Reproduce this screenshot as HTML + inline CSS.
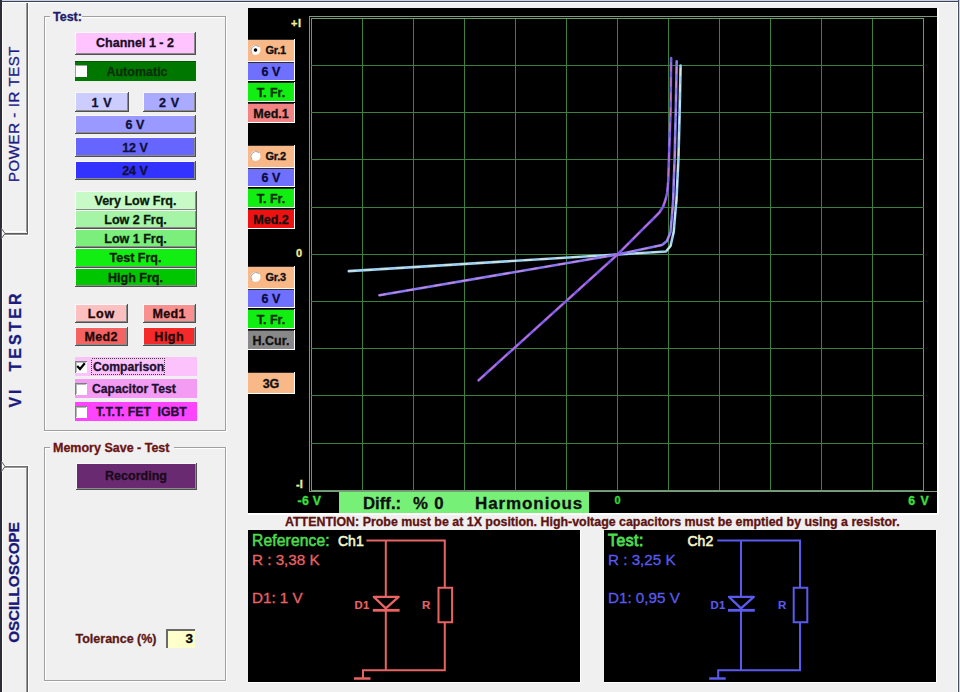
<!DOCTYPE html>
<html><head><meta charset="utf-8"><title>VI Tester</title>
<style>
html,body{margin:0;padding:0;width:960px;height:692px;overflow:hidden;background:#f0f0f0}
svg{display:block}
text{font-family:"Liberation Sans",sans-serif;white-space:pre}
</style></head><body>
<svg width="960" height="692" viewBox="0 0 960 692" shape-rendering="crispEdges">
<rect x="0" y="0" width="960" height="692" fill="#f0f0f0" />
<rect x="0" y="0" width="960" height="1" fill="#c9d2e3" />
<rect x="0" y="1" width="960" height="1" fill="#3b4252" />
<rect x="2" y="2" width="956" height="1" fill="#ffffff" />
<rect x="0" y="0" width="2" height="692" fill="#2b2b39" />
<rect x="2" y="2" width="1" height="692" fill="#ffffff" />
<rect x="958" y="0" width="1" height="692" fill="#4a5060" />
<rect x="959" y="0" width="1" height="692" fill="#c9d2e3" />
<rect x="957" y="2" width="1" height="692" fill="#ffffff" />
<rect x="26" y="3" width="1" height="229" fill="#9a9a9a" />
<rect x="27" y="3" width="1" height="231" fill="#5c5c5c" />
<rect x="28" y="3" width="1" height="232" fill="#ffffff" />
<rect x="4" y="231" width="22" height="1" fill="#ffffff" />
<rect x="4" y="233" width="24" height="1" fill="#5c5c5c" />
<rect x="4" y="234" width="24" height="1" fill="#8c8c8c" />
<rect x="4" y="235" width="25" height="1" fill="#ffffff" />
<path d="M1.5 228.5 L5 233.5 L1.5 238.5 Z" fill="#ffffff" stroke="#5c5c5c" stroke-width="1" shape-rendering="geometricPrecision"/>
<rect x="4" y="465" width="24" height="1" fill="#ffffff" />
<rect x="4" y="466" width="24" height="1" fill="#707070" />
<rect x="4" y="467" width="23" height="1" fill="#9a9a9a" />
<rect x="4" y="468" width="22" height="1" fill="#ffffff" />
<rect x="27" y="466" width="1" height="226" fill="#5c5c5c" />
<rect x="26" y="468" width="1" height="224" fill="#9a9a9a" />
<rect x="28" y="465" width="1" height="227" fill="#ffffff" />
<path d="M1.5 461.5 L5 466.5 L1.5 471.5 Z" fill="#ffffff" stroke="#5c5c5c" stroke-width="1" shape-rendering="geometricPrecision"/>
<text x="0" y="0" transform="translate(19.3,114) rotate(-90)" font-size="15" font-weight="normal" fill="#1a1a88" stroke="#1a1a88" stroke-width="0.3" text-anchor="middle" letter-spacing="0.6">POWER - IR TEST</text>
<text x="0" y="0" transform="translate(20.6,331) rotate(-90)" font-size="16" font-weight="bold" fill="#1a1a80" stroke="#1a1a80" stroke-width="0.3" text-anchor="middle" letter-spacing="3">TESTER</text>
<text x="0" y="0" transform="translate(20.6,397) rotate(-90)" font-size="16" font-weight="bold" fill="#1a1a80" stroke="#1a1a80" stroke-width="0.3" text-anchor="middle" letter-spacing="3">VI</text>
<text x="0" y="0" transform="translate(18.8,582.5) rotate(-90)" font-size="15.2" font-weight="bold" fill="#18187a" stroke="#18187a" stroke-width="0.3" text-anchor="middle" letter-spacing="0">OSCILLOSCOPE</text>
<rect x="44" y="16" width="6" height="1" fill="#a0a0a0" />
<rect x="45" y="17" width="5" height="1" fill="#fff" />
<rect x="82" y="16" width="144" height="1" fill="#a0a0a0" />
<rect x="82" y="17" width="144" height="1" fill="#fff" />
<rect x="44" y="16" width="1" height="415" fill="#a0a0a0" />
<rect x="45" y="17" width="1" height="414" fill="#fff" />
<rect x="225" y="16" width="1" height="415" fill="#a0a0a0" />
<rect x="226" y="16" width="1" height="416" fill="#fff" />
<rect x="44" y="430" width="182" height="1" fill="#a0a0a0" />
<rect x="44" y="431" width="183" height="1" fill="#fff" />
<text x="53" y="21" font-size="12.5" font-weight="bold" fill="#1c1c6c" text-anchor="start" stroke="#1c1c6c" stroke-width="0.3" >Test:</text>
<rect x="44" y="447" width="6" height="1" fill="#a0a0a0" />
<rect x="45" y="448" width="5" height="1" fill="#fff" />
<rect x="174" y="447" width="52" height="1" fill="#a0a0a0" />
<rect x="174" y="448" width="52" height="1" fill="#fff" />
<rect x="44" y="447" width="1" height="234" fill="#a0a0a0" />
<rect x="45" y="448" width="1" height="233" fill="#fff" />
<rect x="225" y="447" width="1" height="234" fill="#a0a0a0" />
<rect x="226" y="447" width="1" height="235" fill="#fff" />
<rect x="44" y="680" width="182" height="1" fill="#a0a0a0" />
<rect x="44" y="681" width="183" height="1" fill="#fff" />
<text x="53" y="452" font-size="12.5" font-weight="bold" fill="#6a1414" text-anchor="start" stroke="#6a1414" stroke-width="0.3" >Memory Save - Test</text>
<rect x="75" y="32" width="121" height="23" fill="#505050" />
<rect x="75" y="32" width="120" height="22" fill="#f8f8f8" />
<rect x="76" y="33" width="119" height="21" fill="#8a8a8a" />
<rect x="76" y="33" width="118" height="20" fill="#ffc4ff" />
<text x="135.0" y="47" font-size="12.5" font-weight="bold" fill="#1c0c24" text-anchor="middle" stroke="#1c0c24" stroke-width="0.3" letter-spacing="0">Channel 1 - 2</text>
<rect x="75" y="61" width="121" height="20" fill="#007800" />
<rect x="75" y="61" width="121" height="1" fill="#005800" />
<rect x="75" y="65" width="12" height="12" fill="#ffffff" />
<rect x="75" y="65" width="12" height="1" fill="#a0a0a0" />
<rect x="75" y="65" width="1" height="12" fill="#a0a0a0" />
<text x="137" y="76" font-size="12.5" font-weight="bold" fill="#0a300a" text-anchor="middle" stroke="#0a300a" stroke-width="0.3" >Automatic</text>
<rect x="75" y="92" width="54" height="20" fill="#505050" />
<rect x="75" y="92" width="53" height="19" fill="#f8f8f8" />
<rect x="76" y="93" width="52" height="18" fill="#8a8a8a" />
<rect x="76" y="93" width="51" height="17" fill="#ccccff" />
<text x="101.8" y="106.5" font-size="12.5" font-weight="bold" fill="#101038" text-anchor="middle" stroke="#101038" stroke-width="0.3" letter-spacing="0.6">1 V</text>
<rect x="143" y="92" width="53" height="20" fill="#505050" />
<rect x="143" y="92" width="52" height="19" fill="#f8f8f8" />
<rect x="144" y="93" width="51" height="18" fill="#8a8a8a" />
<rect x="144" y="93" width="50" height="17" fill="#aaaaff" />
<text x="169.3" y="106.5" font-size="12.5" font-weight="bold" fill="#101038" text-anchor="middle" stroke="#101038" stroke-width="0.3" letter-spacing="0.6">2 V</text>
<rect x="75" y="115" width="121" height="19" fill="#505050" />
<rect x="75" y="115" width="120" height="18" fill="#f8f8f8" />
<rect x="76" y="116" width="119" height="17" fill="#8a8a8a" />
<rect x="76" y="116" width="118" height="16" fill="#9999ff" />
<text x="135.0" y="129" font-size="12.5" font-weight="bold" fill="#101038" text-anchor="middle" stroke="#101038" stroke-width="0.3" letter-spacing="0">6 V</text>
<rect x="75" y="137" width="121" height="20" fill="#505050" />
<rect x="75" y="137" width="120" height="19" fill="#f8f8f8" />
<rect x="76" y="138" width="119" height="18" fill="#8a8a8a" />
<rect x="76" y="138" width="118" height="17" fill="#6666ff" />
<text x="135.0" y="152" font-size="12.5" font-weight="bold" fill="#101038" text-anchor="middle" stroke="#101038" stroke-width="0.3" letter-spacing="0">12 V</text>
<rect x="75" y="161" width="121" height="19" fill="#505050" />
<rect x="75" y="161" width="120" height="18" fill="#f8f8f8" />
<rect x="76" y="162" width="119" height="17" fill="#8a8a8a" />
<rect x="76" y="162" width="118" height="16" fill="#3333ff" />
<text x="135.0" y="175" font-size="12.5" font-weight="bold" fill="#101038" text-anchor="middle" stroke="#101038" stroke-width="0.3" letter-spacing="0">24 V</text>
<rect x="75" y="191" width="122" height="20" fill="#505050" />
<rect x="75" y="191" width="121" height="19" fill="#f8f8f8" />
<rect x="76" y="192" width="120" height="18" fill="#8a8a8a" />
<rect x="76" y="192" width="119" height="17" fill="#c8fac8" />
<text x="135.5" y="205" font-size="12.5" font-weight="bold" fill="#0a1a0a" text-anchor="middle" stroke="#0a1a0a" stroke-width="0.3" letter-spacing="0">Very Low Frq.</text>
<rect x="75" y="210" width="122" height="19" fill="#505050" />
<rect x="75" y="210" width="121" height="18" fill="#f8f8f8" />
<rect x="76" y="211" width="120" height="17" fill="#8a8a8a" />
<rect x="76" y="211" width="119" height="16" fill="#a6f4a6" />
<text x="135.5" y="223.5" font-size="12.5" font-weight="bold" fill="#0a1a0a" text-anchor="middle" stroke="#0a1a0a" stroke-width="0.3" letter-spacing="0">Low 2 Frq.</text>
<rect x="75" y="229" width="122" height="19" fill="#505050" />
<rect x="75" y="229" width="121" height="18" fill="#f8f8f8" />
<rect x="76" y="230" width="120" height="17" fill="#8a8a8a" />
<rect x="76" y="230" width="119" height="16" fill="#7cee7c" />
<text x="135.5" y="242.5" font-size="12.5" font-weight="bold" fill="#0a1a0a" text-anchor="middle" stroke="#0a1a0a" stroke-width="0.3" letter-spacing="0">Low 1 Frq.</text>
<rect x="75" y="248" width="122" height="20" fill="#505050" />
<rect x="75" y="248" width="121" height="19" fill="#f8f8f8" />
<rect x="76" y="249" width="120" height="18" fill="#8a8a8a" />
<rect x="76" y="249" width="119" height="17" fill="#12ee12" />
<text x="135.5" y="262" font-size="12.5" font-weight="bold" fill="#0a1a0a" text-anchor="middle" stroke="#0a1a0a" stroke-width="0.3" letter-spacing="0">Test Frq.</text>
<rect x="75" y="268" width="122" height="19" fill="#505050" />
<rect x="75" y="268" width="121" height="18" fill="#f8f8f8" />
<rect x="76" y="269" width="120" height="17" fill="#8a8a8a" />
<rect x="76" y="269" width="119" height="16" fill="#00c600" />
<text x="135.5" y="281.5" font-size="12.5" font-weight="bold" fill="#0a1a0a" text-anchor="middle" stroke="#0a1a0a" stroke-width="0.3" letter-spacing="0">High Frq.</text>
<rect x="75" y="304" width="53" height="19" fill="#505050" />
<rect x="75" y="304" width="52" height="18" fill="#f8f8f8" />
<rect x="76" y="305" width="51" height="17" fill="#8a8a8a" />
<rect x="76" y="305" width="50" height="16" fill="#fcc0c0" />
<text x="101.4" y="318" font-size="12.5" font-weight="bold" fill="#200808" text-anchor="middle" stroke="#200808" stroke-width="0.3" letter-spacing="0.8">Low</text>
<rect x="143" y="304" width="53" height="19" fill="#505050" />
<rect x="143" y="304" width="52" height="18" fill="#f8f8f8" />
<rect x="144" y="305" width="51" height="17" fill="#8a8a8a" />
<rect x="144" y="305" width="50" height="16" fill="#f89090" />
<text x="169.2" y="318" font-size="12.5" font-weight="bold" fill="#200808" text-anchor="middle" stroke="#200808" stroke-width="0.3" letter-spacing="0.4">Med1</text>
<rect x="75" y="327" width="53" height="19" fill="#505050" />
<rect x="75" y="327" width="52" height="18" fill="#f8f8f8" />
<rect x="76" y="328" width="51" height="17" fill="#8a8a8a" />
<rect x="76" y="328" width="50" height="16" fill="#f46262" />
<text x="101.2" y="341" font-size="12.5" font-weight="bold" fill="#200808" text-anchor="middle" stroke="#200808" stroke-width="0.3" letter-spacing="0.4">Med2</text>
<rect x="143" y="327" width="53" height="19" fill="#505050" />
<rect x="143" y="327" width="52" height="18" fill="#f8f8f8" />
<rect x="144" y="328" width="51" height="17" fill="#8a8a8a" />
<rect x="144" y="328" width="50" height="16" fill="#f42a2a" />
<text x="169.25" y="341" font-size="12.5" font-weight="bold" fill="#200808" text-anchor="middle" stroke="#200808" stroke-width="0.3" letter-spacing="0.5">High</text>
<rect x="75" y="357" width="122" height="19" fill="#fcc2fc" />
<rect x="75" y="361" width="12" height="12" fill="#ffffff" />
<rect x="75" y="361" width="12" height="1" fill="#808080" />
<rect x="75" y="361" width="1" height="12" fill="#808080" />
<rect x="76" y="362" width="10" height="1" fill="#b8b8b8" />
<rect x="76" y="362" width="1" height="10" fill="#b8b8b8" />
<path d="M77.2 366 L80 369 L84.8 363.2" stroke="#000" stroke-width="2.2" fill="none" shape-rendering="geometricPrecision"/>
<rect x="91.5" y="358.5" width="73" height="16" fill="none" stroke="#404040" stroke-width="1" stroke-dasharray="1,1"/>
<text x="93" y="371" font-size="12.2" font-weight="bold" fill="#201030" text-anchor="start" stroke="#201030" stroke-width="0.3" >Comparison</text>
<rect x="75" y="379" width="122" height="19" fill="#f49cf4" />
<rect x="75" y="383" width="12" height="12" fill="#ffffff" />
<rect x="75" y="383" width="12" height="1" fill="#808080" />
<rect x="75" y="383" width="1" height="12" fill="#808080" />
<rect x="76" y="384" width="10" height="1" fill="#b8b8b8" />
<rect x="76" y="384" width="1" height="10" fill="#b8b8b8" />
<text x="92" y="393" font-size="12.2" font-weight="bold" fill="#201030" text-anchor="start" stroke="#201030" stroke-width="0.3" >Capacitor Test</text>
<rect x="75" y="402" width="122" height="19" fill="#ff44ff" />
<rect x="75" y="406" width="12" height="12" fill="#ffffff" />
<rect x="75" y="406" width="12" height="1" fill="#808080" />
<rect x="75" y="406" width="1" height="12" fill="#808080" />
<rect x="76" y="407" width="10" height="1" fill="#b8b8b8" />
<rect x="76" y="407" width="1" height="10" fill="#b8b8b8" />
<text x="96" y="416" font-size="12.2" font-weight="bold" fill="#201030" text-anchor="start" stroke="#201030" stroke-width="0.3" >T.T.T. FET  IGBT</text>
<rect x="76" y="463" width="121" height="27" fill="#505050" />
<rect x="76" y="463" width="120" height="26" fill="#f8f8f8" />
<rect x="77" y="464" width="119" height="25" fill="#8a8a8a" />
<rect x="77" y="464" width="118" height="24" fill="#6a2a72" />
<text x="136.0" y="480" font-size="12.5" font-weight="bold" fill="#1a0a1a" text-anchor="middle" stroke="#1a0a1a" stroke-width="0.3" letter-spacing="0">Recording</text>
<text x="75.5" y="643" font-size="12.5" font-weight="bold" fill="#5c1818" text-anchor="start" stroke="#5c1818" stroke-width="0.3" >Tolerance (%)</text>
<rect x="166" y="629" width="29" height="19" fill="#ffffcc" />
<rect x="166" y="629" width="29" height="2" fill="#6a6a6a" />
<rect x="166" y="629" width="2" height="19" fill="#6a6a6a" />
<text x="193" y="643" font-size="13.5" font-weight="bold" fill="#000" text-anchor="end" stroke="#000" stroke-width="0.3" >3</text>
<rect x="248" y="8" width="689" height="505" fill="#000000" />
<rect x="937" y="8" width="2" height="507" fill="#ffffff" />
<rect x="248" y="513" width="691" height="2" fill="#ffffff" />
<rect x="309" y="16" width="628" height="1" fill="#7c9a7c" />
<rect x="309" y="16" width="1" height="476" fill="#7c9a7c" />
<rect x="309" y="491" width="628" height="1" fill="#7c9a7c" />
<rect x="311" y="18" width="1" height="473" fill="#6c9a6c" />
<rect x="362" y="18" width="1" height="473" fill="#3d803e" />
<rect x="413" y="18" width="1" height="473" fill="#3d803e" />
<rect x="464" y="18" width="1" height="473" fill="#3d803e" />
<rect x="515" y="18" width="1" height="473" fill="#3d803e" />
<rect x="566" y="18" width="1" height="473" fill="#3d803e" />
<rect x="617" y="18" width="1" height="473" fill="#3d803e" />
<rect x="668" y="18" width="1" height="473" fill="#3d803e" />
<rect x="719" y="18" width="1" height="473" fill="#3d803e" />
<rect x="770" y="18" width="1" height="473" fill="#3d803e" />
<rect x="821" y="18" width="1" height="473" fill="#3d803e" />
<rect x="872" y="18" width="1" height="473" fill="#3d803e" />
<rect x="923" y="18" width="1" height="473" fill="#6c9a6c" />
<rect x="311" y="18" width="613" height="1" fill="#6c9a6c" />
<rect x="311" y="65" width="613" height="1" fill="#3d803e" />
<rect x="311" y="112" width="613" height="1" fill="#3d803e" />
<rect x="311" y="159" width="613" height="1" fill="#3d803e" />
<rect x="311" y="207" width="613" height="1" fill="#3d803e" />
<rect x="311" y="254" width="613" height="1" fill="#3d803e" />
<rect x="311" y="301" width="613" height="1" fill="#3d803e" />
<rect x="311" y="348" width="613" height="1" fill="#3d803e" />
<rect x="311" y="395" width="613" height="1" fill="#3d803e" />
<rect x="311" y="443" width="613" height="1" fill="#3d803e" />
<rect x="311" y="490" width="613" height="1" fill="#6c9a6c" />
<rect x="248" y="39" width="47" height="23" fill="#ffffff" />
<rect x="248" y="39" width="46" height="1" fill="#303030" />
<rect x="248" y="40" width="46" height="21" fill="#f8b888" />
<circle cx="255.5" cy="50.0" r="5" fill="#fff" shape-rendering="geometricPrecision"/>
<path d="M252 53.5 A5 5 0 0 1 259 46.5" stroke="#a0a0a0" stroke-width="1" fill="none" shape-rendering="geometricPrecision"/>
<circle cx="255.5" cy="50.0" r="1.8" fill="#000" shape-rendering="geometricPrecision"/>
<text x="265.5" y="54.0" font-size="11" font-weight="bold" fill="#101010" text-anchor="start" stroke="#101010" stroke-width="0.3" letter-spacing="-0.3">Gr.1</text>
<rect x="248" y="62" width="47" height="19" fill="#ffffff" />
<rect x="248" y="62" width="46" height="1" fill="#303030" />
<rect x="248" y="63" width="46" height="17" fill="#7070ff" />
<text x="271" y="76.0" font-size="12.5" font-weight="bold" fill="#0a0a40" text-anchor="middle" stroke="#0a0a40" stroke-width="0.3" >6 V</text>
<rect x="248" y="82" width="47" height="20" fill="#ffffff" />
<rect x="248" y="82" width="46" height="1" fill="#303030" />
<rect x="248" y="83" width="46" height="18" fill="#11ee11" />
<text x="271" y="96.5" font-size="12.5" font-weight="bold" fill="#0a2a0a" text-anchor="middle" stroke="#0a2a0a" stroke-width="0.3" >T. Fr.</text>
<rect x="248" y="103" width="47" height="20" fill="#ffffff" />
<rect x="248" y="103" width="46" height="1" fill="#303030" />
<rect x="248" y="104" width="46" height="18" fill="#f38282" />
<text x="271" y="117.5" font-size="12.5" font-weight="bold" fill="#101010" text-anchor="middle" stroke="#101010" stroke-width="0.3" >Med.1</text>
<rect x="248" y="145" width="47" height="23" fill="#ffffff" />
<rect x="248" y="145" width="46" height="1" fill="#303030" />
<rect x="248" y="146" width="46" height="21" fill="#f8b888" />
<circle cx="255.5" cy="156.0" r="5" fill="#fff" shape-rendering="geometricPrecision"/>
<path d="M252 159.5 A5 5 0 0 1 259 152.5" stroke="#a0a0a0" stroke-width="1" fill="none" shape-rendering="geometricPrecision"/>
<text x="265.5" y="160.0" font-size="11" font-weight="bold" fill="#101010" text-anchor="start" stroke="#101010" stroke-width="0.3" letter-spacing="-0.3">Gr.2</text>
<rect x="248" y="168" width="47" height="19" fill="#ffffff" />
<rect x="248" y="168" width="46" height="1" fill="#303030" />
<rect x="248" y="169" width="46" height="17" fill="#7070ff" />
<text x="271" y="182.0" font-size="12.5" font-weight="bold" fill="#0a0a40" text-anchor="middle" stroke="#0a0a40" stroke-width="0.3" >6 V</text>
<rect x="248" y="188" width="47" height="20" fill="#ffffff" />
<rect x="248" y="188" width="46" height="1" fill="#303030" />
<rect x="248" y="189" width="46" height="18" fill="#11ee11" />
<text x="271" y="202.5" font-size="12.5" font-weight="bold" fill="#0a2a0a" text-anchor="middle" stroke="#0a2a0a" stroke-width="0.3" >T. Fr.</text>
<rect x="248" y="209" width="47" height="20" fill="#ffffff" />
<rect x="248" y="209" width="46" height="1" fill="#303030" />
<rect x="248" y="210" width="46" height="18" fill="#ee1111" />
<text x="271" y="223.5" font-size="12.5" font-weight="bold" fill="#101010" text-anchor="middle" stroke="#101010" stroke-width="0.3" >Med.2</text>
<rect x="248" y="266" width="47" height="23" fill="#ffffff" />
<rect x="248" y="266" width="46" height="1" fill="#303030" />
<rect x="248" y="267" width="46" height="21" fill="#f8b888" />
<circle cx="255.5" cy="277.0" r="5" fill="#fff" shape-rendering="geometricPrecision"/>
<path d="M252 280.5 A5 5 0 0 1 259 273.5" stroke="#a0a0a0" stroke-width="1" fill="none" shape-rendering="geometricPrecision"/>
<text x="265.5" y="281.0" font-size="11" font-weight="bold" fill="#101010" text-anchor="start" stroke="#101010" stroke-width="0.3" letter-spacing="-0.3">Gr.3</text>
<rect x="248" y="289" width="47" height="19" fill="#ffffff" />
<rect x="248" y="289" width="46" height="1" fill="#303030" />
<rect x="248" y="290" width="46" height="17" fill="#7070ff" />
<text x="271" y="303.0" font-size="12.5" font-weight="bold" fill="#0a0a40" text-anchor="middle" stroke="#0a0a40" stroke-width="0.3" >6 V</text>
<rect x="248" y="309" width="47" height="20" fill="#ffffff" />
<rect x="248" y="309" width="46" height="1" fill="#303030" />
<rect x="248" y="310" width="46" height="18" fill="#11ee11" />
<text x="271" y="323.5" font-size="12.5" font-weight="bold" fill="#0a2a0a" text-anchor="middle" stroke="#0a2a0a" stroke-width="0.3" >T. Fr.</text>
<rect x="248" y="330" width="47" height="20" fill="#ffffff" />
<rect x="248" y="330" width="46" height="1" fill="#303030" />
<rect x="248" y="331" width="46" height="18" fill="#888888" />
<text x="271" y="344.5" font-size="12.5" font-weight="bold" fill="#101010" text-anchor="middle" stroke="#101010" stroke-width="0.3" >H.Cur.</text>
<rect x="248" y="372" width="47" height="22" fill="#ffffff" />
<rect x="248" y="372" width="46" height="1" fill="#303030" />
<rect x="248" y="373" width="46" height="20" fill="#f8b888" />
<text x="271" y="387.5" font-size="12.5" font-weight="bold" fill="#101010" text-anchor="middle" stroke="#101010" stroke-width="0.3" >3G</text>
<text x="291" y="27" font-size="11" font-weight="bold" fill="#eeee9a" text-anchor="start" stroke="#eeee9a" stroke-width="0.3" letter-spacing="0.5">+I</text>
<text x="296" y="257" font-size="11" font-weight="bold" fill="#eeee9a" text-anchor="start" stroke="#eeee9a" stroke-width="0.3" >0</text>
<text x="296" y="488" font-size="11" font-weight="bold" fill="#eeee9a" text-anchor="start" stroke="#eeee9a" stroke-width="0.3" >-I</text>
<text x="297.5" y="505" font-size="12.3" font-weight="bold" fill="#3ce03c" text-anchor="start" stroke="#3ce03c" stroke-width="0.3" letter-spacing="0.3">-6 V</text>
<text x="929.5" y="505" font-size="12.3" font-weight="bold" fill="#3ce03c" text-anchor="end" stroke="#3ce03c" stroke-width="0.3" letter-spacing="0.9">6 V</text>
<text x="617.5" y="504" font-size="11" font-weight="bold" fill="#33dd33" text-anchor="middle" stroke="#33dd33" stroke-width="0.3" >0</text>
<rect x="339" y="492" width="250" height="21" fill="#77f077" />
<text x="363" y="509" font-size="16.8" font-weight="bold" fill="#101010" text-anchor="start" stroke="#101010" stroke-width="0.3" >Diff.:</text>
<text x="413" y="509" font-size="16.8" font-weight="bold" fill="#101010" text-anchor="start" stroke="#101010" stroke-width="0.3" letter-spacing="0.8">% 0</text>
<text x="475" y="508.5" font-size="17" font-weight="bold" fill="#101010" text-anchor="start" stroke="#101010" stroke-width="0.3" letter-spacing="0.9">Harmonious</text>
<path d="M348.8 271.1 L617.5 254.5 L666.0 251.5 L670.5 246.0 L673.7 232.0 L675.7 208.0 L676.5 200.0 L677.4 180.0 L678.4 160.0 L679.7 110.0 L680.6 65.6" stroke="#9ccff0" stroke-width="2.6" fill="none" stroke-linejoin="round" stroke-linecap="round" shape-rendering="geometricPrecision" />
<path d="M348.8 271.1 L617.5 254.5 L666.0 251.5 L670.5 246.0 L673.7 232.0 L675.7 208.0 L676.5 200.0 L677.4 180.0 L678.4 160.0 L679.7 110.0 L680.6 65.6" stroke="#e8eee0" stroke-width="1.4" fill="none" stroke-linejoin="round" stroke-linecap="round" shape-rendering="geometricPrecision" stroke-dasharray="7,9" stroke-opacity="0.75"/>
<path d="M379.4 295.2 L617.5 254.5 L662.0 245.0 L667.0 241.0 L670.5 232.0 L672.4 210.0 L673.2 200.0 L673.8 180.0 L674.6 160.0 L675.8 110.0 L676.7 61.3" stroke="#8878f0" stroke-width="2.6" fill="none" stroke-linejoin="round" stroke-linecap="round" shape-rendering="geometricPrecision" />
<path d="M379.4 295.2 L617.5 254.5 L662.0 245.0 L667.0 241.0 L670.5 232.0 L672.4 210.0 L673.2 200.0 L673.8 180.0 L674.6 160.0 L675.8 110.0 L676.7 61.3" stroke="#d890d8" stroke-width="1.4" fill="none" stroke-linejoin="round" stroke-linecap="round" shape-rendering="geometricPrecision" stroke-dasharray="6,8" stroke-opacity="0.75"/>
<path d="M478.6 380.3 L617.5 254.5 L642.5 229.4 L654.0 218.0 L659.4 212.5 L663.2 206.5 L665.4 200.0 L667.2 193.0 L668.3 180.0 L668.9 160.0 L670.6 110.0 L671.1 58.0" stroke="#7c5ae8" stroke-width="2.6" fill="none" stroke-linejoin="round" stroke-linecap="round" shape-rendering="geometricPrecision" />
<path d="M478.6 380.3 L617.5 254.5 L642.5 229.4 L654.0 218.0 L659.4 212.5 L663.2 206.5 L665.4 200.0 L667.2 193.0 L668.3 180.0 L668.9 160.0 L670.6 110.0 L671.1 58.0" stroke="#d878c8" stroke-width="1.4" fill="none" stroke-linejoin="round" stroke-linecap="round" shape-rendering="geometricPrecision" stroke-dasharray="8,7" stroke-opacity="0.75"/>
<text x="285" y="526" font-size="12.42" font-weight="bold" fill="#5e1212" text-anchor="start" stroke="#5e1212" stroke-width="0.3" >ATTENTION: Probe must be at 1X position. High-voltage capacitors must be emptied by using a resistor.</text>
<rect x="248" y="530" width="332" height="152" fill="#000" />
<rect x="580" y="530" width="1" height="153" fill="#fff" />
<rect x="248" y="682" width="333" height="1" fill="#fff" />
<text x="252" y="546.3" font-size="15.6" font-weight="normal" fill="#4cdc4c" text-anchor="start" stroke="#4cdc4c" stroke-width="0.55" letter-spacing="0.15">Reference:</text>
<text x="338" y="545.8" font-size="14" font-weight="normal" fill="#f4f4c8" text-anchor="start" stroke="#f4f4c8" stroke-width="0.6" >Ch1</text>
<text x="252" y="564.8" font-size="15.2" font-weight="normal" fill="#e86464" text-anchor="start" stroke="#e86464" stroke-width="0.3" >R : 3,38 K</text>
<text x="252" y="602.8" font-size="15.2" font-weight="normal" fill="#e86464" text-anchor="start" stroke="#e86464" stroke-width="0.3" >D1: 1 V</text>
<path d="M366.4 540.5 H444.8 V587.7 M385.8 540.5 V597 M385.8 609 V670.2 M444.8 622.3 V670.2 H363 V678" stroke="#e86464" stroke-width="2" fill="none" shape-rendering="geometricPrecision"/>
<path d="M354 678.5 H370.5" stroke="#e86464" stroke-width="2.5" fill="none" shape-rendering="geometricPrecision"/>
<path d="M438.5 587.7 H452.1 V622.3 H438.5 Z" stroke="#e86464" stroke-width="2" fill="none" shape-rendering="geometricPrecision"/>
<path d="M373.8 596.9 H398.6 L385.8 608.3 Z" stroke="#e86464" stroke-width="2.3" fill="none" stroke-linejoin="round" shape-rendering="geometricPrecision"/>
<path d="M372.8 610.3 H399.6" stroke="#e86464" stroke-width="2.8" fill="none" shape-rendering="geometricPrecision"/>
<text x="354.5" y="608.5" font-size="11.3" font-weight="bold" fill="#e86464" text-anchor="start" stroke="#e86464" stroke-width="0.15" letter-spacing="0.3">D1</text>
<text x="422" y="608.5" font-size="11.5" font-weight="bold" fill="#e86464" text-anchor="start" stroke="#e86464" stroke-width="0.15" >R</text>
<rect x="604" y="530" width="332" height="152" fill="#000" />
<rect x="936" y="530" width="1" height="153" fill="#fff" />
<rect x="604" y="682" width="333" height="1" fill="#fff" />
<text x="608" y="546.3" font-size="15.6" font-weight="normal" fill="#4cdc4c" text-anchor="start" stroke="#4cdc4c" stroke-width="0.9" letter-spacing="0.6">Test:</text>
<text x="687.5" y="545.8" font-size="14" font-weight="normal" fill="#f4f4c8" text-anchor="start" stroke="#f4f4c8" stroke-width="0.6" >Ch2</text>
<text x="608" y="564.8" font-size="15.2" font-weight="normal" fill="#5a5aee" text-anchor="start" stroke="#5a5aee" stroke-width="0.3" >R : 3,25 K</text>
<text x="608" y="602.8" font-size="15.2" font-weight="normal" fill="#5a5aee" text-anchor="start" stroke="#5a5aee" stroke-width="0.3" >D1: 0,95 V</text>
<path d="M717.3 540.5 H800.0 V587.7 M741.0 540.5 V597 M741.0 609 V670.2 M800.0 622.3 V670.2 H718.2 V678" stroke="#5a5aee" stroke-width="2" fill="none" shape-rendering="geometricPrecision"/>
<path d="M709.2 678.5 H725.7" stroke="#5a5aee" stroke-width="2.5" fill="none" shape-rendering="geometricPrecision"/>
<path d="M793.7 587.7 H807.3 V622.3 H793.7 Z" stroke="#5a5aee" stroke-width="2" fill="none" shape-rendering="geometricPrecision"/>
<path d="M729.0 596.9 H753.8 L741.0 608.3 Z" stroke="#5a5aee" stroke-width="2.3" fill="none" stroke-linejoin="round" shape-rendering="geometricPrecision"/>
<path d="M728.0 610.3 H754.8" stroke="#5a5aee" stroke-width="2.8" fill="none" shape-rendering="geometricPrecision"/>
<text x="710.5" y="608.5" font-size="11.3" font-weight="bold" fill="#5a5aee" text-anchor="start" stroke="#5a5aee" stroke-width="0.15" letter-spacing="0.3">D1</text>
<text x="778" y="608.5" font-size="11.5" font-weight="bold" fill="#5a5aee" text-anchor="start" stroke="#5a5aee" stroke-width="0.15" >R</text>
</svg>
</body></html>
